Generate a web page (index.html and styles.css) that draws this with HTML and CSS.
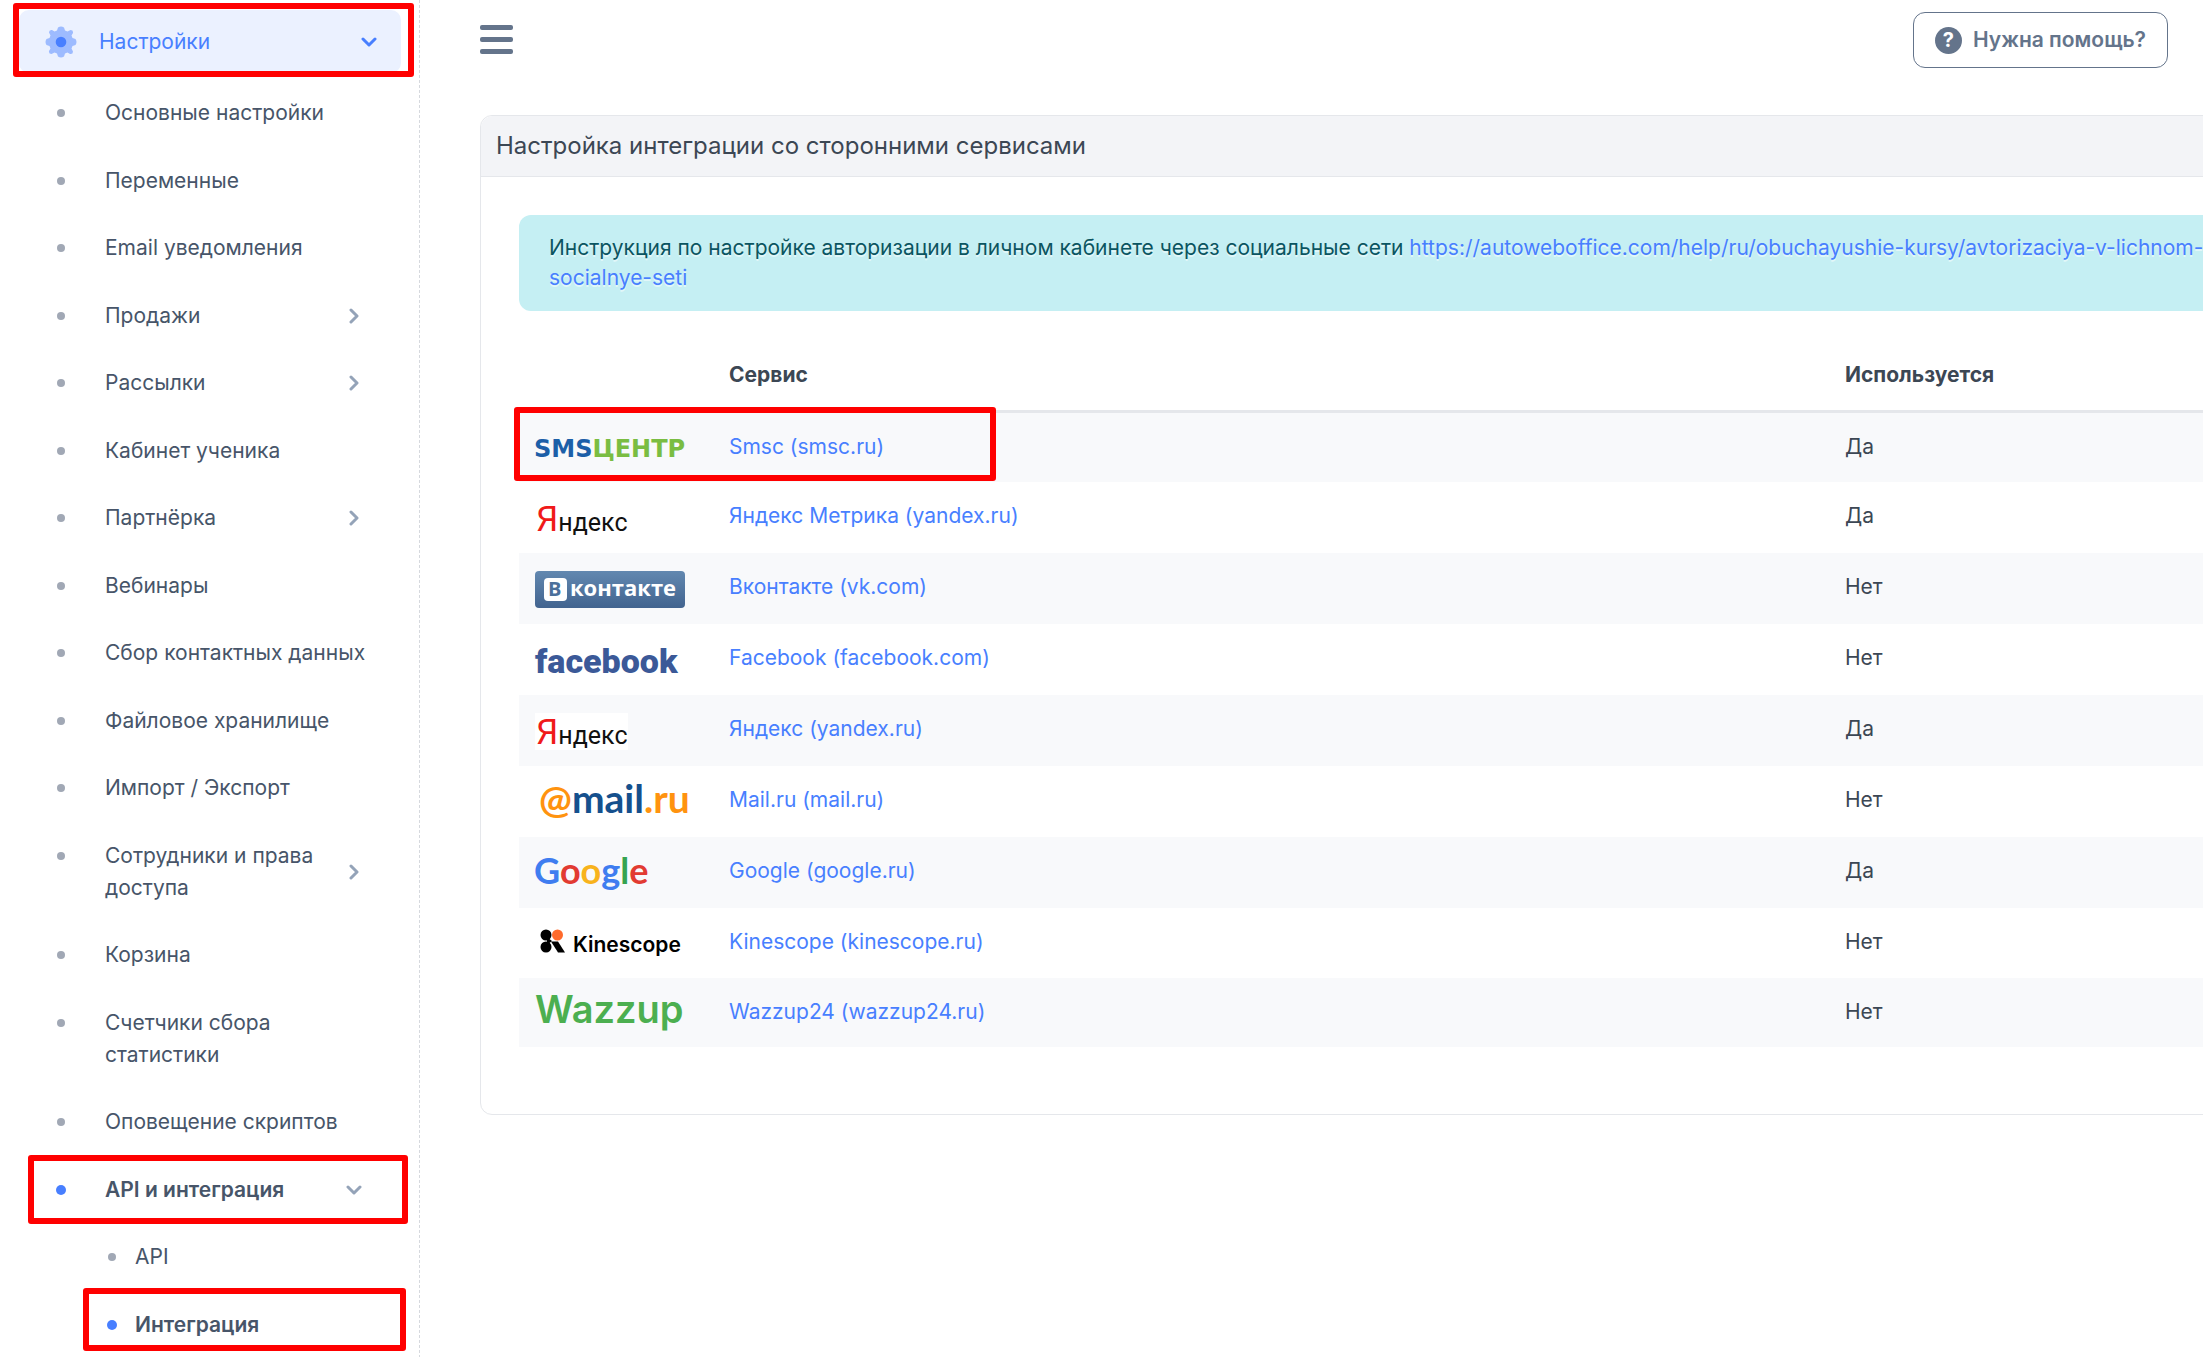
FILE: index.html
```html
<!DOCTYPE html>
<html lang="ru">
<head>
	<meta charset="UTF-8">
	<title>Настройка интеграции</title>
	<link rel="stylesheet" href="styles.css">
</head>
<body>

	<!-- shared icons -->
	<svg class="sprite" width="0" height="0" aria-hidden="true">
		<symbol id="arrow-right" viewBox="0 0 16 16">
			<path d="M5 2l6 6-6 6" fill="none" stroke="currentColor" stroke-width="3" stroke-linecap="round" stroke-linejoin="round"/>
		</symbol>
		<symbol id="arrow-down" viewBox="0 0 16 16">
			<path d="M2 5l6 6 6-6" fill="none" stroke="currentColor" stroke-width="3" stroke-linecap="round" stroke-linejoin="round"/>
		</symbol>
	</svg>

	<nav class="sidebar">
		<a href="#" class="menu-head">
			<svg class="gear" viewBox="0 0 32 32" aria-hidden="true">
				<path fill="#9dbbff" d="M13 1.500Q16-.5 19 1.500L20 4.500 22.500 5.500 25.500 4Q28.500 4 28 7L26.500 9.500 27.500 12 30.500 13Q32.500 16 30.500 19L27.500 20 26.500 22.500 28 25.500Q28 28.500 25 28L22.500 26.500 20 27.500 19 30.500Q16 32.500 13 30.500L12 27.500 9.500 26.500 6.500 28Q3.500 28 4 25L5.500 22.500 4.500 20 1.500 19Q-.5 16 1.500 13L4.500 12 5.500 9.500 4 6.500Q4 3.500 7 4L9.500 5.500 12 4.500Z"/>
				<circle cx="16" cy="16" r="5.300" fill="#487fff"/>
			</svg>
			<span class="menu-text">Настройки</span>
			<svg class="arrow"><use href="#arrow-down"/></svg>
			<span class="mark mark-head"></span>
		</a>

		<ul class="menu">
			<li><a href="#" class="item"><span class="dot"></span><span class="menu-text">Основные настройки</span></a></li>
			<li><a href="#" class="item"><span class="dot"></span><span class="menu-text">Переменные</span></a></li>
			<li><a href="#" class="item"><span class="dot"></span><span class="menu-text">Email уведомления</span></a></li>
			<li><a href="#" class="item"><span class="dot"></span><span class="menu-text">Продажи</span><svg class="arrow"><use href="#arrow-right"/></svg></a></li>
			<li><a href="#" class="item"><span class="dot"></span><span class="menu-text">Рассылки</span><svg class="arrow"><use href="#arrow-right"/></svg></a></li>
			<li><a href="#" class="item"><span class="dot"></span><span class="menu-text">Кабинет ученика</span></a></li>
			<li><a href="#" class="item"><span class="dot"></span><span class="menu-text">Партнёрка</span><svg class="arrow"><use href="#arrow-right"/></svg></a></li>
			<li><a href="#" class="item"><span class="dot"></span><span class="menu-text">Вебинары</span></a></li>
			<li><a href="#" class="item"><span class="dot"></span><span class="menu-text">Сбор контактных данных</span></a></li>
			<li><a href="#" class="item"><span class="dot"></span><span class="menu-text">Файловое хранилище</span></a></li>
			<li><a href="#" class="item"><span class="dot"></span><span class="menu-text">Импорт / Экспорт</span></a></li>
			<li><a href="#" class="item"><span class="dot"></span><span class="menu-text">Сотрудники и права доступа</span><svg class="arrow"><use href="#arrow-right"/></svg></a></li>
			<li><a href="#" class="item"><span class="dot"></span><span class="menu-text">Корзина</span></a></li>
			<li><a href="#" class="item"><span class="dot"></span><span class="menu-text">Счетчики сбора<br>статистики</span></a></li>
			<li><a href="#" class="item"><span class="dot"></span><span class="menu-text">Оповещение скриптов</span></a></li>
			<li>
				<a href="#" class="item active"><span class="dot"></span><span class="menu-text">API и интеграция</span><svg class="arrow"><use href="#arrow-down"/></svg><span class="mark mark-api"></span></a>
				<ul class="menu submenu">
					<li><a href="#" class="item"><span class="dot"></span><span class="menu-text">API</span></a></li>
					<li><a href="#" class="item active"><span class="dot"></span><span class="menu-text">Интеграция</span><span class="mark mark-sub"></span></a></li>
				</ul>
			</li>
		</ul>
	</nav>

	<main class="content">
		<header class="topbar">
			<button class="burger" aria-label="Меню"><span></span><span></span><span></span></button>
			<button class="help"><span class="help-icon">?</span>Нужна помощь?</button>
		</header>

		<section class="card">
			<h1 class="card-title">Настройка интеграции со сторонними сервисами</h1>
			<div class="card-body">
				<div class="alert">
					Инструкция по настройке авторизации в личном кабинете через социальные сети
					<a href="#">https://autoweboffice.com/help/ru/obuchayushie-kursy/avtorizaciya-v-lichnom-<wbr>socialnye-seti</a>
				</div>

				<table class="services">
					<thead>
						<tr>
							<th class="col-logo"></th>
							<th>Сервис</th>
							<th class="col-used">Используется</th>
						</tr>
					</thead>
					<tbody>
						<tr>
							<td>
								<svg class="logo logo-low" viewBox="0 0 162 35"><text x="-1" y="26" class="t-sms">SMS<tspan fill="#7abd42">ЦЕНТР</tspan></text></svg>
								<span class="mark mark-row"></span>
							</td>
							<td><a href="#">Smsc (smsc.ru)</a></td>
							<td>Да</td>
						</tr>
						<tr>
							<td><svg class="logo" viewBox="0 0 162 37"><text x="1" y="31" class="t-ya"><tspan class="t-ya-big">Я</tspan>ндекс</text></svg></td>
							<td><a href="#">Яндекс Метрика (yandex.ru)</a></td>
							<td>Да</td>
						</tr>
						<tr>
							<td>
								<svg class="logo" viewBox="0 0 162 37">
									<defs>
										<linearGradient id="vk" x1="0" y1="0" x2="0" y2="1">
											<stop offset="0" stop-color="#6288b0"/>
											<stop offset="1" stop-color="#42648f"/>
										</linearGradient>
									</defs>
									<rect width="150" height="37" rx="4" fill="url(#vk)"/>
									<rect x="9" y="7" width="23" height="23" rx="4" fill="#fff"/>
									<text x="13" y="25" class="t-vk t-vk-b" fill="#4b709b">В</text>
									<text x="35" y="25" class="t-vk" fill="#fff">контакте</text>
								</svg>
							</td>
							<td><a href="#">Вконтакте (vk.com)</a></td>
							<td>Нет</td>
						</tr>
						<tr>
							<td><svg class="logo" viewBox="0 0 162 37"><text x="0" y="31" class="t-fb">facebook</text></svg></td>
							<td><a href="#">Facebook (facebook.com)</a></td>
							<td>Нет</td>
						</tr>
						<tr>
							<td><svg class="logo" viewBox="0 0 162 37"><rect width="93" height="37" fill="#fff"/><text x="1" y="31" class="t-ya"><tspan class="t-ya-big">Я</tspan>ндекс</text></svg></td>
							<td><a href="#">Яндекс (yandex.ru)</a></td>
							<td>Да</td>
						</tr>
						<tr>
							<td><svg class="logo" viewBox="0 0 162 37"><text x="4" y="29" class="t-mail"><tspan fill="#ff930f">@</tspan>mail<tspan fill="#ff930f">.ru</tspan></text></svg></td>
							<td><a href="#">Mail.ru (mail.ru)</a></td>
							<td>Нет</td>
						</tr>
						<tr>
							<td><svg class="logo" viewBox="0 0 162 37"><text x="-1" y="29" class="t-google"><tspan fill="#3f7df0">G</tspan><tspan fill="#e23b32">o</tspan><tspan fill="#f8b31c">o</tspan><tspan fill="#3f7df0">g</tspan><tspan fill="#35a350">l</tspan><tspan fill="#e23b32">e</tspan></text></svg></td>
							<td><a href="#">Google (google.ru)</a></td>
							<td>Да</td>
						</tr>
						<tr>
							<td>
								<svg class="logo logo-mid" viewBox="0 0 162 36">
									<circle cx="11" cy="9" r="5.500"/>
									<circle cx="22.500" cy="9" r="5.500" fill="#ff6a2b"/>
									<circle cx="11" cy="21" r="5.500"/>
									<path d="M16 15.500h7l7 11h-7z"/>
									<path d="M12 11l5 4-5 4z"/>
									<text x="38" y="26" class="t-kine">Kinescope</text>
								</svg>
							</td>
							<td><a href="#">Kinescope (kinescope.ru)</a></td>
							<td>Нет</td>
						</tr>
						<tr>
							<td><svg class="logo logo-low" viewBox="0 0 162 35"><text x="0" y="27" class="t-wazz">Wazzup</text></svg></td>
							<td><a href="#">Wazzup24 (wazzup24.ru)</a></td>
							<td>Нет</td>
						</tr>
					</tbody>
				</table>
			</div>
		</section>
	</main>

</body>
</html>
```
FILE: styles.css
```css
* {
	box-sizing: border-box;
	margin: 0;
	padding: 0;
}
body {
	display: flex;
	min-height: 100vh;
	overflow: hidden;
	background-color: #fff;
	color: #3c4754;
	font-family: Inter, "Liberation Sans", sans-serif;
	font-size: 21px;
	line-height: 32px;
}
a {
	color: #487fff;
	text-decoration: none;
}
button {
	border: none;
	background: none;
	font: inherit;
	cursor: pointer;
}
.sprite {
	position: absolute;
}

/* sidebar */
.sidebar {
	flex: none;
	width: 420px;
	padding-top: 10px;
	border-right: 1px dashed #d6d9de;
}
.menu-head {
	position: relative;
	display: flex;
	align-items: center;
	height: 63px;
	margin: 0 18px 6px 19px;
	padding: 0 24px 0 26px;
	border-radius: 10px;
	background-color: #ebf1ff;
}
.gear {
	width: 32px;
	height: 32px;
	margin-right: 22px;
}
.menu {
	display: grid;
	grid-auto-rows: minmax(68px, auto) minmax(67px, auto);
	list-style: none;
}
.menu-text {
	flex: 1;
}
.item {
	position: relative;
	display: flex;
	padding: 18px 57px 17px 58px;
	color: #475569;
}
.item .menu-text {
	margin-right: -10px;
}
.arrow {
	flex: none;
	width: 16px;
	height: 16px;
}
.item .arrow {
	align-self: center;
	color: #94a3b8;
}
.dot {
	flex: none;
	width: 8px;
	height: 8px;
	margin: 12px 40px 0 -1px;
	border-radius: 50%;
	background-color: #a1a8b5;
}
.submenu .item {
	padding-left: 109px;
}
.submenu .dot {
	margin-right: 19px;
}
.active {
	font-weight: 600;
}
.active .dot {
	background-color: #487fff;
	box-shadow: 0 0 0 1px #487fff;
}

/* red frames round the steps of the guide */
.mark {
	position: absolute;
	border: 6px solid #f00;
	border-radius: 3px;
	pointer-events: none;
}
.mark-head {
	inset: -7px -13px -4px -6px;
}
.mark-api {
	inset: -1px 11px -1px 28px;
}
.mark-sub {
	inset: -3px 13px 7px 83px;
}
.mark-row {
	inset: -6px auto 1px -5px;
	width: 482px;
}

/* content */
.content {
	flex: 1;
	min-width: 0;
	padding-left: 60px;
}
.topbar {
	display: flex;
	justify-content: space-between;
	align-items: flex-start;
	margin-bottom: 47px;
	padding: 12px 35px 0 0;
}
.burger {
	display: flex;
	flex-direction: column;
	gap: 7px;
	width: 33px;
	margin-top: 13px;
}
.burger span {
	height: 5px;
	border-radius: 2px;
	background-color: #64748b;
}
.help {
	display: flex;
	align-items: center;
	gap: 11px;
	height: 56px;
	padding: 0 21px;
	border: 1px solid #64748b;
	border-radius: 12px;
	color: #64748b;
	font-weight: 600;
}
.help-icon {
	width: 27px;
	height: 27px;
	border-radius: 50%;
	background-color: #64748b;
	color: #fff;
	font-size: 20px;
	font-weight: 700;
	line-height: 27px;
}

/* the card is wider than the window, its right side is cut off */
.card {
	margin-right: -97px;
	border: 1px solid #e5e7eb;
	border-radius: 12px;
}
.card-title {
	padding: 14px 15px;
	border-bottom: 1px solid #e5e7eb;
	border-radius: 12px 12px 0 0;
	background-color: #f3f4f7;
	font-size: 24px;
	font-weight: 400;
}
.card-body {
	padding: 38px 38px 67px;
}
.alert {
	margin-bottom: 30px;
	padding: 18px 30px;
	border-radius: 12px;
	background-color: #c5eff3;
	color: #0b5561;
	line-height: 30px;
	text-shadow: 0 2px 0 rgba(255, 255, 255, .5);
}

.services {
	width: 100%;
	border-spacing: 0;
	table-layout: fixed;
}
.col-logo {
	width: 194px;
}
.col-used {
	width: 432px;
}
th {
	padding: 18px 16px 19px;
	border-bottom: 3px solid #e5e7eb;
	font-weight: 700;
	text-align: left;
}
td {
	position: relative;
	padding: 18px 16px 16px;
	vertical-align: top;
}
tbody tr:nth-child(odd) {
	background-color: #f8f9fb;
}

/* logos */
.logo {
	display: block;
	width: 162px;
	height: 37px;
	overflow: visible;
}
.logo-mid {
	height: 36px;
}
.logo-low {
	height: 35px;
}
.t-sms {
	fill: #1c5fa8;
	font: bold 24px "DejaVu Sans", sans-serif;
}
.t-ya {
	fill: #111;
	font: 25px Roboto, sans-serif;
}
.t-ya-big {
	fill: #f01a1a;
	font-size: 35px;
}
.t-vk {
	font: bold 22px "Open Sans", sans-serif;
}
.t-vk-b {
	font-size: 20px;
}
.t-fb {
	fill: #3b5998;
	font: 900 34px Roboto, sans-serif;
}
.t-mail {
	fill: #15508d;
	font: bold 39px Lato, sans-serif;
}
.t-google {
	font: bold 36px Lato, sans-serif;
}
.t-kine {
	font: 600 21px Inter, sans-serif;
}
.t-wazz {
	fill: #4caf50;
	font: 600 38px Inter, sans-serif;
}
```
